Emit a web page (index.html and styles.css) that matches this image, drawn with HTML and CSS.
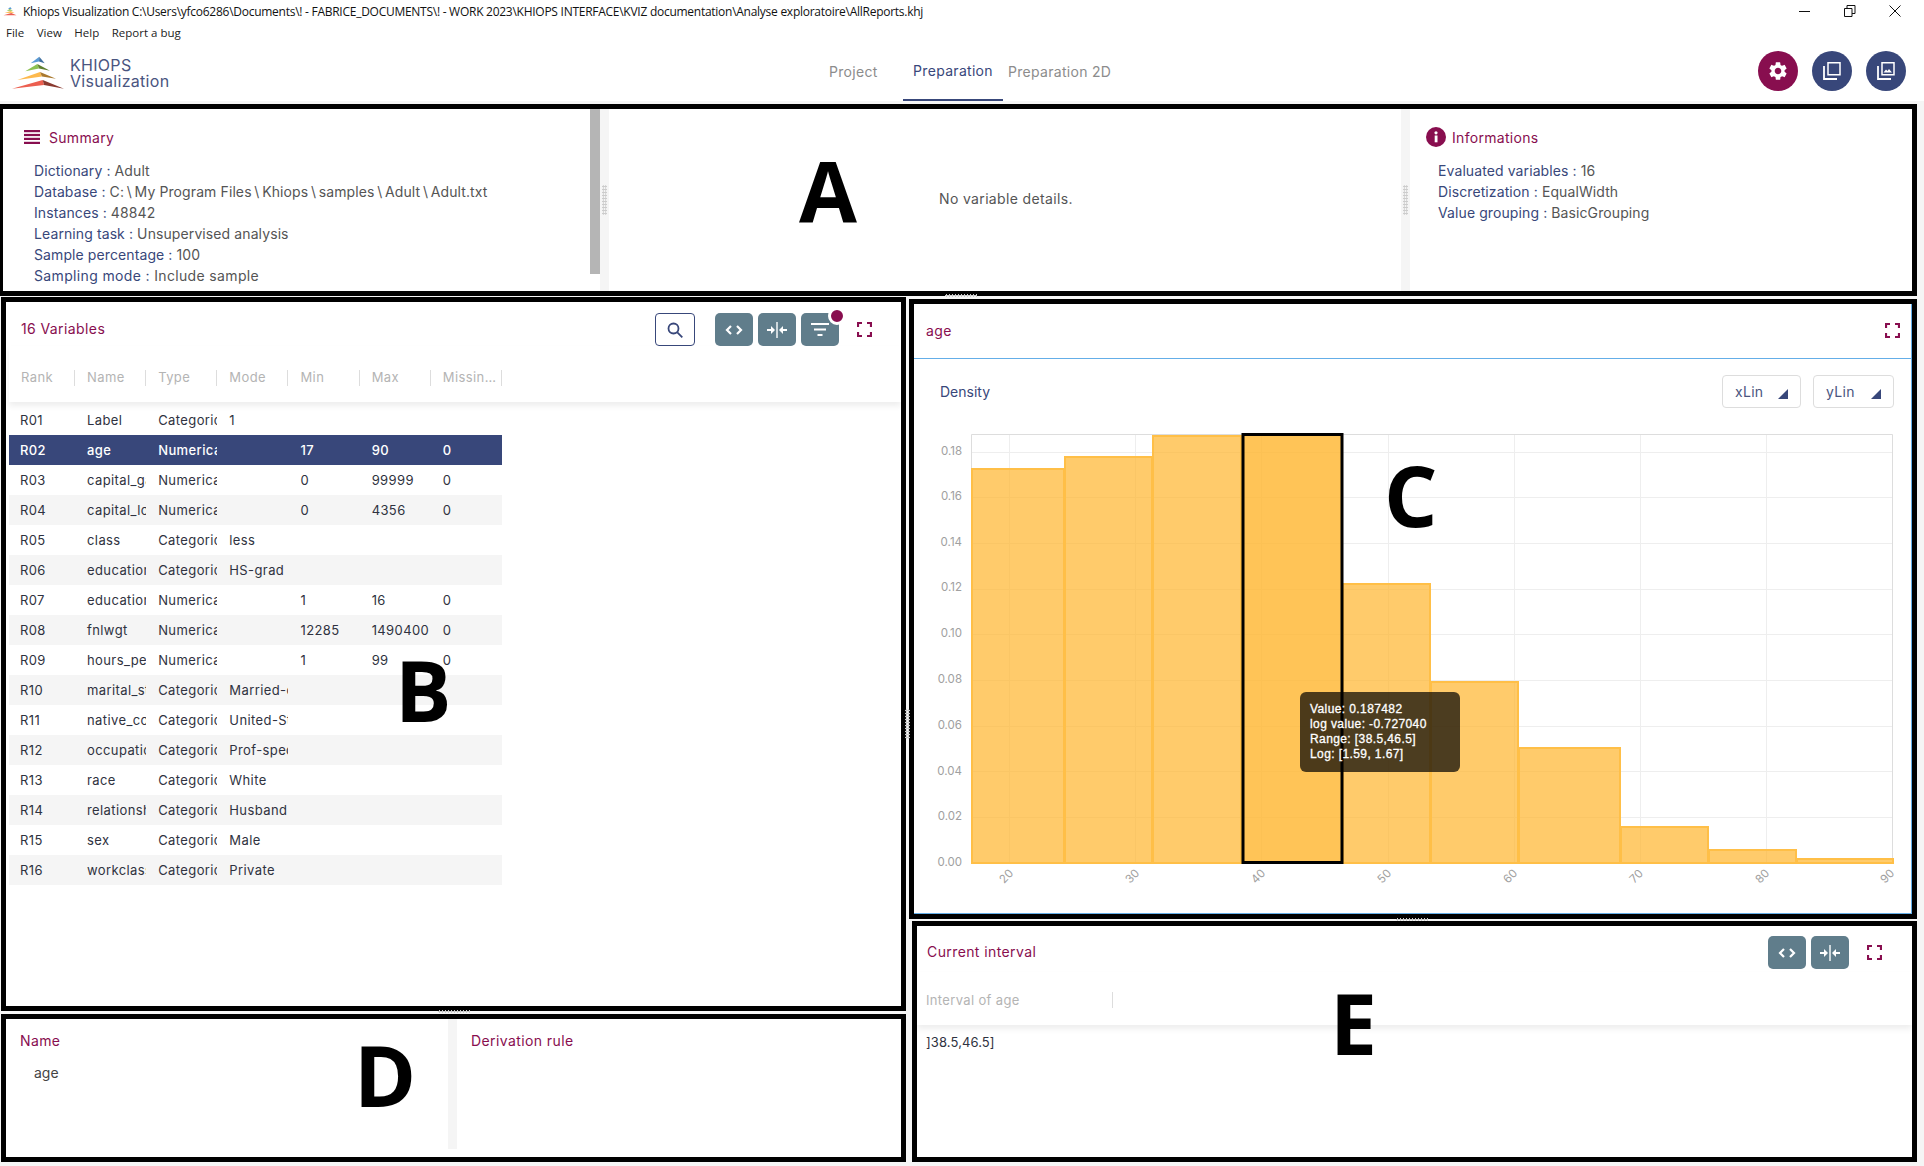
FILE: index.html
```html
<!DOCTYPE html>
<html lang="en">
<head>
  <meta charset="UTF-8">
  <meta name="viewport" content="width=device-width, initial-scale=1.0">
  <title>Khiops Visualization</title>
  <link rel="stylesheet" href="styles.css">
</head>
<body>
  <div class="titlebar">
    <svg class="title-icon" viewBox="10 54 56 36">
      <polygon points="39,56 30,64 45,64" fill="#5b9bd5"/>
      <polygon points="37,64 25,71 50,71" fill="#8cc152"/>
      <polygon points="40,72 17,80 56,79" fill="#fdb94d"/>
      <polygon points="43,80 12,89 64,89" fill="#ec5f50"/>
    </svg>
    <span class="title-text">Khiops Visualization C:\Users\yfco6286\Documents\! - FABRICE_DOCUMENTS\! - WORK 2023\KHIOPS INTERFACE\KVIZ documentation\Analyse exploratoire\AllReports.khj</span>
    <div class="win-controls">
      <svg width="12" height="12" viewBox="0 0 12 12"><path d="M0 6.500h11" stroke="#111" fill="none"/></svg>
      <svg width="12" height="12" viewBox="0 0 12 12"><path d="M.5 3.500h7.500v8h-7.500zM3 3.500v-3h8v8h-3" stroke="#111" fill="none"/></svg>
      <svg width="12" height="12" viewBox="0 0 12 12"><path d="M.5.5l11 11M11.500.5l-11 11" stroke="#111" fill="none"/></svg>
    </div>
  </div>
  <div class="menubar">
    <span>File</span><span>View</span><span>Help</span><span>Report a bug</span>
  </div>

  <header class="app-header">
    <div class="logo">
      <svg class="logo-mark" viewBox="10 54 56 36">
        <polygon points="39.300,56.700 30.700,63.300 39,61.500" fill="#5b9bd5"/>
        <polygon points="39.300,56.700 44.700,63.300 39,61.500" fill="#3f6f9f"/>
        <polygon points="37.300,64 25.300,71.300 39,68.500" fill="#8cc152"/>
        <polygon points="37.300,64 50,70.700 39,68.500" fill="#5f7f2f"/>
        <polygon points="40,72 17.300,80 42,76.500" fill="#fdb94d"/>
        <polygon points="40,72 56,78.700 42,76.500" fill="#a9792e"/>
        <polygon points="42.700,80 12,88.700 44,85" fill="#ec5f50"/>
        <polygon points="42.700,80 64,88.700 44,85" fill="#8a3a30"/>
      </svg>
      <div class="logo-text">KHIOPS<br>Visualization</div>
    </div>
    <nav class="tabs">
      <a class="tab tab-project">Project</a>
      <a class="tab tab-active">Preparation</a>
      <a class="tab tab-2d">Preparation 2D</a>
    </nav>
    <div class="round-buttons">
      <button class="round-btn round-pink">
        <svg width="22" height="22" viewBox="0 0 24 24" fill="#fff"><path d="M19.140 12.940c.04-.3.06-.61.06-.94 0-.32-.02-.64-.07-.94l2.030-1.580a.49.49 0 0 0 .12-.61l-1.920-3.320a.488.488 0 0 0-.59-.22l-2.390.96c-.5-.38-1.030-.7-1.620-.94l-.36-2.540a.484.484 0 0 0-.48-.41h-3.840c-.24 0-.43.17-.47.41l-.36 2.540c-.59.24-1.130.57-1.620.94l-2.390-.96c-.22-.08-.47 0-.59.22L2.740 8.870c-.12.21-.08.47.12.61l2.030 1.580c-.05.3-.09.63-.09.94s.02.64.07.94l-2.030 1.580a.49.49 0 0 0-.12.61l1.920 3.320c.12.22.37.29.59.22l2.390-.96c.5.38 1.030.7 1.620.94l.36 2.540c.05.24.24.41.48.41h3.840c.24 0 .44-.17.47-.41l.36-2.540c.59-.24 1.130-.56 1.620-.94l2.390.96c.22.08.47 0 .59-.22l1.920-3.320c.12-.22.07-.47-.12-.61l-2.010-1.580zM12 15.600c-1.980 0-3.600-1.620-3.600-3.600s1.620-3.600 3.600-3.600 3.600 1.620 3.600 3.600-1.620 3.600-3.600 3.600z"/></svg>
      </button>
      <button class="round-btn round-blue">
        <svg width="18" height="18" viewBox="0 0 18 18" fill="none" stroke="#fff" stroke-width="1.500"><path d="M5 .8h12v12H5z"/><path d="M1 4v13h13" stroke-width="1.800"/></svg>
      </button>
      <button class="round-btn round-blue">
        <svg width="18" height="18" viewBox="0 0 18 18" fill="none" stroke="#fff" stroke-width="1.500"><path d="M5 .8h12v12H5z"/><path d="M1 4v13h13" stroke-width="1.800"/><path d="M6.500 10.500l2.500-3 1.500 1.500 1.500-2 3 3.500z" fill="#fff" stroke="none"/></svg>
      </button>
    </div>
  </header>

  <main class="workspace">
    <section class="frame frame-a">
      <div class="summary">
        <div class="summary-body">
          <h2 class="info-title">
            <svg width="16" height="14" viewBox="0 0 16 14" fill="#880e4f"><rect width="16" height="2.200"/><rect y="3.900" width="16" height="2.200"/><rect y="7.800" width="16" height="2.200"/><rect y="11.800" width="16" height="2.200"/></svg>
            Summary
          </h2>
          <ul class="info-list">
            <li><b>Dictionary :</b> Adult</li>
            <li><b>Database :</b> C:<i class="sep">\</i>My Program Files<i class="sep">\</i>Khiops<i class="sep">\</i>samples<i class="sep">\</i>Adult<i class="sep">\</i>Adult.txt</li>
            <li><b>Instances :</b> 48842</li>
            <li><b>Learning task :</b> Unsupervised analysis</li>
            <li><b>Sample percentage :</b> 100</li>
            <li class="li-wide"><b>Sampling mode :</b> Include sample</li>
          </ul>
        </div>
        <div class="scroll-thumb"></div>
      </div>
      <div class="gutter"><span class="grip-v"></span></div>
      <div class="details">No variable details.</div>
      <div class="gutter"><span class="grip-v"></span></div>
      <div class="informations">
        <h2 class="info-title">
          <svg width="20" height="20" viewBox="0 0 20 20"><circle cx="10" cy="10" r="10" fill="#880e4f"/><rect x="8.700" y="8.500" width="2.800" height="6.800" fill="#fff"/><circle cx="10" cy="5.800" r="1.600" fill="#fff"/></svg>
          Informations
        </h2>
        <ul class="info-list">
          <li><b>Evaluated variables :</b> 16</li>
          <li><b>Discretization :</b> EqualWidth</li>
          <li><b>Value grouping :</b> BasicGrouping</li>
        </ul>
      </div>
      <div class="mark mark-a">A</div>
    </section>

    <div class="columns">
      <div class="col-left">
        <section class="frame frame-b">
          <div class="panel-top">
            <h2 class="panel-title">16 Variables</h2>
            <div class="tools">
              <button class="search-btn">
                <svg width="18" height="18" viewBox="0 0 18 18" fill="none" stroke="#38477a" stroke-width="1.800"><circle cx="7.500" cy="7.500" r="5"/><path d="M11.300 11.300l5 5"/></svg>
              </button>
              <div class="tool-group">
                <button class="tool-btn"><svg width="18" height="10" viewBox="0 0 18 10" fill="none" stroke="#fff" stroke-width="2.200"><path d="M6 1L2 5l4 4M12 1l4 4-4 4"/></svg></button>
                <button class="tool-btn"><svg width="22" height="16" viewBox="0 0 22 16" fill="#fff"><rect x="10.300" width="1.400" height="16"/><path d="M1 7h4V4l4 4-4 4V9H1zM21 7h-4V4l-4 4 4 4V9h4z"/></svg></button>
                <button class="tool-btn tool-filter">
                  <svg width="18" height="13" viewBox="0 0 18 13" fill="#fff"><rect width="18" height="2"/><rect x="3" y="5.500" width="12" height="2"/><rect x="6.500" y="11" width="5" height="2"/></svg>
                  <span class="badge"></span>
                </button>
              </div>
              <svg class="fullscreen" viewBox="0 0 15 15"><path d="M1 5V1h4M10 1h4v4M14 10v4h-4M5 14H1v-4"/></svg>
            </div>
          </div>
          <div class="table-head">
            <table class="vars">
              <tr><th>Rank</th><th>Name</th><th>Type</th><th>Mode</th><th>Min</th><th>Max</th><th>Missin…</th></tr>
            </table>
          </div>
          <table class="vars vars-body">
            <tr><td>R01</td><td>Label</td><td>Categorical</td><td>1</td><td></td><td></td><td></td></tr>
            <tr class="selected"><td>R02</td><td>age</td><td>Numerical</td><td></td><td>17</td><td>90</td><td>0</td></tr>
            <tr><td>R03</td><td>capital_gain</td><td>Numerical</td><td></td><td>0</td><td>99999</td><td>0</td></tr>
            <tr class="alt"><td>R04</td><td>capital_loss</td><td>Numerical</td><td></td><td>0</td><td>4356</td><td>0</td></tr>
            <tr><td>R05</td><td>class</td><td>Categorical</td><td>less</td><td></td><td></td><td></td></tr>
            <tr class="alt"><td>R06</td><td>education</td><td>Categorical</td><td>HS-grad</td><td></td><td></td><td></td></tr>
            <tr><td>R07</td><td>education_num</td><td>Numerical</td><td></td><td>1</td><td>16</td><td>0</td></tr>
            <tr class="alt"><td>R08</td><td>fnlwgt</td><td>Numerical</td><td></td><td>12285</td><td>1490400</td><td>0</td></tr>
            <tr><td>R09</td><td>hours_per_week</td><td>Numerical</td><td></td><td>1</td><td>99</td><td>0</td></tr>
            <tr class="alt"><td>R10</td><td>marital_status</td><td>Categorical</td><td>Married-civ-spouse</td><td></td><td></td><td></td></tr>
            <tr><td>R11</td><td>native_country</td><td>Categorical</td><td>United-States</td><td></td><td></td><td></td></tr>
            <tr class="alt"><td>R12</td><td>occupation</td><td>Categorical</td><td>Prof-specialty</td><td></td><td></td><td></td></tr>
            <tr><td>R13</td><td>race</td><td>Categorical</td><td>White</td><td></td><td></td><td></td></tr>
            <tr class="alt"><td>R14</td><td>relationship</td><td>Categorical</td><td>Husband</td><td></td><td></td><td></td></tr>
            <tr><td>R15</td><td>sex</td><td>Categorical</td><td>Male</td><td></td><td></td><td></td></tr>
            <tr class="alt"><td>R16</td><td>workclass</td><td>Categorical</td><td>Private</td><td></td><td></td><td></td></tr>
          </table>
          <div class="mark mark-b">B</div>
        </section>
        <section class="frame frame-d">
          <div class="d-name">
            <h2 class="panel-title">Name</h2>
            <p class="d-value">age</p>
          </div>
          <div class="gutter gutter-d"></div>
          <div class="d-rule">
            <h2 class="panel-title">Derivation rule</h2>
          </div>
          <div class="mark mark-d">D</div>
        </section>
      </div>

      <div class="col-right">
        <section class="frame frame-c">
          <div class="chart-panel">
            <div class="chart-top">
              <h2 class="panel-title">age</h2>
              <svg class="fullscreen" viewBox="0 0 15 15"><path d="M1 5V1h4M10 1h4v4M14 10v4h-4M5 14H1v-4"/></svg>
            </div>
            <div class="chart-tools">
              <span class="chart-name">Density</span>
              <div class="selects">
                <div class="select select-x">xLin<i class="corner"></i></div>
                <div class="select select-y">yLin<i class="corner"></i></div>
              </div>
            </div>
            <div class="chart">
              <svg class="chart-svg" viewBox="914 420 997 492" width="997" height="492">
                <g stroke="#eee" stroke-width="1">
                  <path d="M1009.500 434v429M1135.500 434v429M1261.500 434v429M1388.500 434v429M1514.500 434v429M1640.500 434v429M1766.500 434v429"/>
                  <path d="M971 452.500h922M971 497.500h922M971 543.500h922M971 589.500h922M971 634.500h922M971 680.500h922M971 726.500h922M971 771.500h922M971 817.500h922"/>
                </g>
                <path d="M971.500 863V434.500H1892.500V863" fill="none" stroke="#ddd"/>
                <g class="bars">
                  <rect x="972" y="469" width="92" height="394"/>
                  <rect x="1065" y="457" width="87" height="406"/>
                  <rect x="1153" y="436" width="88" height="427"/>
                  <rect x="1343" y="584" width="87" height="279"/>
                  <rect x="1431" y="682" width="87" height="181"/>
                  <rect x="1519" y="748" width="101" height="115"/>
                  <rect x="1621" y="827" width="87" height="36"/>
                  <rect x="1709" y="850" width="87" height="13"/>
                  <rect x="1797" y="859" width="96" height="4"/>
                </g>
                <rect class="bar-selected" x="1243" y="434.500" width="99" height="428"/>
                <g class="y-labels">
                  <text x="962" y="455">0.18</text>
                  <text x="962" y="500">0.16</text>
                  <text x="962" y="546">0.14</text>
                  <text x="962" y="591">0.12</text>
                  <text x="962" y="637">0.10</text>
                  <text x="962" y="683">0.08</text>
                  <text x="962" y="729">0.06</text>
                  <text x="962" y="775">0.04</text>
                  <text x="962" y="820">0.02</text>
                  <text x="962" y="866">0.00</text>
                </g>
                <g class="x-labels">
                  <text transform="translate(1009 879) rotate(-45)">20</text>
                  <text transform="translate(1135 879) rotate(-45)">30</text>
                  <text transform="translate(1261 879) rotate(-45)">40</text>
                  <text transform="translate(1387 879) rotate(-45)">50</text>
                  <text transform="translate(1513 879) rotate(-45)">60</text>
                  <text transform="translate(1639 879) rotate(-45)">70</text>
                  <text transform="translate(1765 879) rotate(-45)">80</text>
                  <text transform="translate(1890 879) rotate(-45)">90</text>
                </g>
              </svg>
              <div class="tooltip">
                Value: 0.187482<br>log value: -0.727040<br>Range: [38.5,46.5]<br>Log: [1.59, 1.67]
              </div>
            </div>
          </div>
          <div class="mark mark-c">C</div>
        </section>
        <section class="frame frame-e">
          <div class="panel-top panel-top-e">
            <h2 class="panel-title">Current interval</h2>
            <div class="tools">
              <div class="tool-group">
                <button class="tool-btn"><svg width="18" height="10" viewBox="0 0 18 10" fill="none" stroke="#fff" stroke-width="2.200"><path d="M6 1L2 5l4 4M12 1l4 4-4 4"/></svg></button>
                <button class="tool-btn"><svg width="22" height="16" viewBox="0 0 22 16" fill="#fff"><rect x="10.300" width="1.400" height="16"/><path d="M1 7h4V4l4 4-4 4V9H1zM21 7h-4V4l-4 4 4 4V9h4z"/></svg></button>
              </div>
              <svg class="fullscreen" viewBox="0 0 15 15"><path d="M1 5V1h4M10 1h4v4M14 10v4h-4M5 14H1v-4"/></svg>
            </div>
          </div>
          <div class="interval-head"><span>Interval of age</span></div>
          <div class="interval-row">]38.5,46.5]</div>
          <div class="mark mark-e">E</div>
        </section>
      </div>
    </div>

    <span class="grip-h grip-top"></span>
    <span class="grip-h grip-left"></span>
    <span class="grip-h grip-right"></span>
    <span class="grip-v grip-middle"></span>
  </main>
</body>
</html>
```

FILE: styles.css
```css
* {
  box-sizing: border-box;
}
html, body {
  margin: 0;
  height: 1166px;
  overflow: hidden;
}
body {
  width: 1924px;
  background: #fff;
  font-family: Inter, "Noto Sans", sans-serif;
  font-size: 14px;
  color: #555;
}
h2, p, ul {
  margin: 0;
  padding: 0;
}
button {
  border: none;
  padding: 0;
  background: none;
  display: flex;
  align-items: center;
  justify-content: center;
}

/* window chrome */
.titlebar {
  height: 22px;
  display: flex;
  align-items: center;
  font-family: "Open Sans", sans-serif;
  font-size: 12px;
  color: #111;
}
.title-icon {
  width: 14px;
  height: 12px;
  margin: 0 6px 0 3px;
}
.title-text {
  letter-spacing: -0.265px;
  white-space: nowrap;
}
.win-controls {
  margin-left: auto;
  display: flex;
  gap: 33px;
  padding-right: 23px;
}
.menubar {
  height: 21px;
  display: flex;
  align-items: center;
  gap: 12.500px;
  padding-left: 6px;
  font-family: "Open Sans", sans-serif;
  font-size: 11.500px;
  color: #222;
}

/* app header */
.app-header {
  height: 58px;
  display: flex;
  align-items: center;
}
.logo {
  width: 829px;
  display: flex;
  align-items: center;
  padding-left: 10px;
}
.logo-mark {
  width: 56px;
  height: 36px;
}
.logo-text {
  margin: 2px 0 0 4px;
  font-size: 16px;
  line-height: 16px;
  letter-spacing: 0.3px;
  color: #4a5580;
}
.tabs {
  display: flex;
  height: 58px;
  align-items: center;
}
.tab {
  font-size: 14px;
  letter-spacing: 0.3px;
  color: #8c8c8c;
  white-space: nowrap;
  margin-bottom: 2px;
}
.tab-project {
  width: 74px;
}
.tab-active {
  width: 100px;
  height: 58px;
  line-height: 56px;
  margin: 0 5px 0 0;
  text-align: center;
  color: #38477a;
  border-bottom: 2px solid #38477a;
}
.round-buttons {
  margin: 0 0 2px auto;
  display: flex;
  gap: 14px;
  padding-right: 18px;
}
.round-btn {
  width: 40px;
  height: 40px;
  border-radius: 50%;
}
.round-pink {
  background: #880e4f;
}
.round-blue {
  background: #38477a;
}

/* workspace and annotated frames */
.workspace {
  position: relative;
  height: 1065px;
  background: #f5f5f5;
  padding-top: 3px;
}
.frame {
  position: relative;
  border: 5px solid #000;
  background: #fff;
}
.frame-a {
  margin-left: -2px;
  width: 1919px;
  height: 192px;
  display: flex;
}
.gutter {
  width: 9px;
  flex: none;
  background: #f5f5f5;
  display: flex;
  align-items: center;
  justify-content: center;
}
.grip-v {
  width: 5px;
  height: 30px;
  background: radial-gradient(circle, #ccc 1px, transparent 1.200px) 0 0 / 2.500px 3px;
}
.grip-h {
  position: absolute;
  width: 32px;
  height: 3px;
  background: radial-gradient(circle, #ccc 1px, transparent 1.200px) 0 0 / 3px 3px;
}
.grip-top {
  left: 945px;
  top: 193px;
}
.grip-left {
  left: 438px;
  top: 909px;
}
.grip-right {
  left: 1396px;
  top: 817px;
}
.grip-middle {
  position: absolute;
  left: 905px;
  top: 608px;
}
.summary {
  width: 597px;
  flex: none;
  display: flex;
}
.summary-body {
  flex: 1;
  padding: 18px 0 0 21px;
}
.scroll-thumb {
  width: 10px;
  height: 165px;
  background: #b5b5b5;
}
.details {
  flex: 1;
  padding: 81px 0 0 330px;
  letter-spacing: 0.35px;
}
.informations {
  width: 502px;
  padding: 18px 0 0 16px;
}
.info-title {
  display: flex;
  align-items: center;
  gap: 9px;
  height: 20px;
  font-size: 14px;
  font-weight: 400;
  letter-spacing: 0.3px;
  color: #880e4f;
}
.informations .info-title {
  gap: 6px;
}
.info-list {
  list-style: none;
  margin-top: 13px;
  padding-left: 10px;
}
.informations .info-list {
  padding-left: 12px;
}
.info-list li {
  height: 21px;
  line-height: 21px;
  white-space: nowrap;
  letter-spacing: 0.1px;
}
.info-list .li-wide {
  letter-spacing: 0.35px;
}
.info-list b {
  font-weight: 400;
  color: #38477a;
}
.sep {
  font-style: normal;
  padding: 0 2.700px;
}

/* columns */
.columns {
  display: flex;
}
.col-left {
  width: 905px;
  margin-left: 1px;
  flex: none;
}
.col-right {
  margin-left: 3px;
  width: 1008px;
  flex: none;
}
.frame-b {
  margin-top: 1px;
  height: 714px;
}
.frame-d {
  margin-top: 3px;
  height: 148px;
  display: flex;
}
.frame-c {
  margin-top: 3px;
  height: 620px;
}
.frame-e {
  margin: 2px 0 0 3px;
  height: 241px;
  width: 1005px;
}

/* panel toolbars */
.panel-top {
  display: flex;
  align-items: center;
  justify-content: space-between;
  height: 33px;
  margin-top: 11px;
  padding: 0 29px 0 15px;
}
.panel-top .panel-title {
  margin-bottom: 2px;
}
.panel-title {
  font-size: 14px;
  font-weight: 400;
  letter-spacing: 0.4px;
  color: #880e4f;
}
.tools {
  display: flex;
  align-items: center;
}
.search-btn {
  width: 40px;
  height: 33px;
  border: 1px solid #38477a;
  border-radius: 4px;
  margin-right: 20px;
}
.tool-group {
  display: flex;
  gap: 5px;
  margin-right: 18px;
}
.tool-btn {
  position: relative;
  width: 38px;
  height: 33px;
  border-radius: 5px;
  background: #607d8b;
}
.badge {
  position: absolute;
  right: -7px;
  top: -6px;
  width: 18px;
  height: 18px;
  border-radius: 50%;
  background: #880e4f;
  border: 3px solid #fff;
}
.fullscreen {
  width: 15px;
  height: 15px;
  fill: none;
  stroke: #880e4f;
  stroke-width: 2.200;
}

/* variables table */
.table-head {
  margin: 0 0 3px 3px;
  box-shadow: 0 4px 6px rgba(0, 0, 0, 0.07);
  height: 56px;
  display: flex;
  align-items: flex-end;
}
.vars {
  width: 493px;
  table-layout: fixed;
  border-collapse: collapse;
  letter-spacing: 0.4px;
}
.vars-body {
  margin-left: 3px;
  color: #2f3240;
  font-size: 13px;
}
.vars th {
  height: 56px;
  vertical-align: bottom;
  padding: 0 0 17px 12px;
  line-height: 16px;
  font-size: 13px;
  font-weight: 400;
  text-align: left;
  color: #b4b4b4;
  white-space: nowrap;
  overflow: hidden;
  background: linear-gradient(#ddd, #ddd) no-repeat right bottom 16px / 1px 16px;
}
.vars th:first-child,
.vars td:first-child {
  width: 66px;
  padding-left: 11px;
}
.vars th:first-child {
  padding-left: 12px;
}
.vars td {
  height: 30px;
  padding: 0 0 0 12px;
  white-space: nowrap;
  overflow: hidden;
}
.alt td {
  background: #f5f5f5;
}
.selected td {
  background: #38477a;
  color: #fff;
  font-weight: 500;
}

/* frame D */
.d-name,
.d-rule {
  flex: 1;
  padding: 13px 14px;
}
.d-name {
  flex: none;
  width: 442px;
}
.d-value {
  margin: 15px 0 0 14px;
  color: #444;
}
.gutter-d {
  height: 130px;
}

/* chart */
.chart-panel {
  height: 100%;
  border-right: 1px solid #64aee8;
  border-bottom: 1px solid #64aee8;
}
.chart-top {
  height: 55px;
  display: flex;
  align-items: center;
  justify-content: space-between;
  padding: 0 11px 2px 12px;
  border-bottom: 1px solid #64aee8;
}
.chart-tools {
  height: 61px;
  display: flex;
  justify-content: space-between;
  padding: 16px 17px 0 26px;
}
.chart-name {
  line-height: 34px;
  color: #38477a;
}
.selects {
  display: flex;
  gap: 12px;
}
.select {
  position: relative;
  height: 33px;
  line-height: 31px;
  padding-left: 12px;
  border: 1px solid #ddd;
  border-radius: 4px;
  color: #4a5580;
  letter-spacing: 0.3px;
}
.select-x {
  width: 79px;
}
.select-y {
  width: 81px;
}
.corner {
  position: absolute;
  right: 12px;
  top: 13px;
  width: 0;
  height: 0;
  border-style: solid;
  border-width: 0 0 10px 10px;
  border-color: transparent transparent #38477a transparent;
}
.chart {
  position: relative;
}
.chart-svg {
  display: block;
}
.bars rect {
  fill: rgba(255, 183, 50, 0.72);
  stroke: #ffbf47;
  stroke-width: 2;
}
.bar-selected {
  fill: rgba(255, 183, 50, 0.82);
  stroke: #000;
  stroke-width: 3;
}
.y-labels text {
  font-size: 11.500px;
  fill: #a0a0a0;
  text-anchor: end;
}
.x-labels text {
  font-size: 11.500px;
  fill: #a0a0a0;
  text-anchor: middle;
}
.tooltip {
  position: absolute;
  left: 386px;
  top: 272px;
  width: 160px;
  height: 80px;
  padding: 10px 0 0 10px;
  border-radius: 6px;
  background: rgba(0, 0, 0, 0.7);
  color: #fff;
  font-family: "Liberation Sans", Arial, sans-serif;
  font-size: 12px;
  line-height: 15px;
  letter-spacing: 0.4px;
  -webkit-text-stroke: 0.3px #fff;
}

/* frame E */
.panel-top-e {
  margin-top: 10px;
  padding: 0 30px 0 10px;
}
.interval-head {
  height: 53px;
  margin-top: 3px;
  padding: 20px 0 0 9px;
  line-height: 16px;
  font-size: 13px;
  letter-spacing: 0.35px;
  color: #b4b4b4;
  box-shadow: 0 4px 6px rgba(0, 0, 0, 0.07);
}
.interval-head span {
  display: block;
  width: 187px;
  border-right: 1px solid #ddd;
}
.interval-row {
  padding: 9px 0 0 9px;
  font-size: 13px;
  line-height: 16px;
  letter-spacing: 0.1px;
  color: #2f3240;
}

/* big annotation letters */
.mark {
  position: absolute;
  font-family: "Open Sans", sans-serif;
  font-weight: 700;
  font-size: 84px;
  line-height: 84px;
  color: #000;
}
.mark-a {
  left: 796px;
  top: 39px;
}
.mark-b {
  left: 389px;
  top: 346px;
}
.mark-c {
  left: 470px;
  top: 149px;
}
.mark-d {
  left: 348px;
  top: 14px;
}
.mark-e {
  left: 413px;
  top: 55px;
}
```
